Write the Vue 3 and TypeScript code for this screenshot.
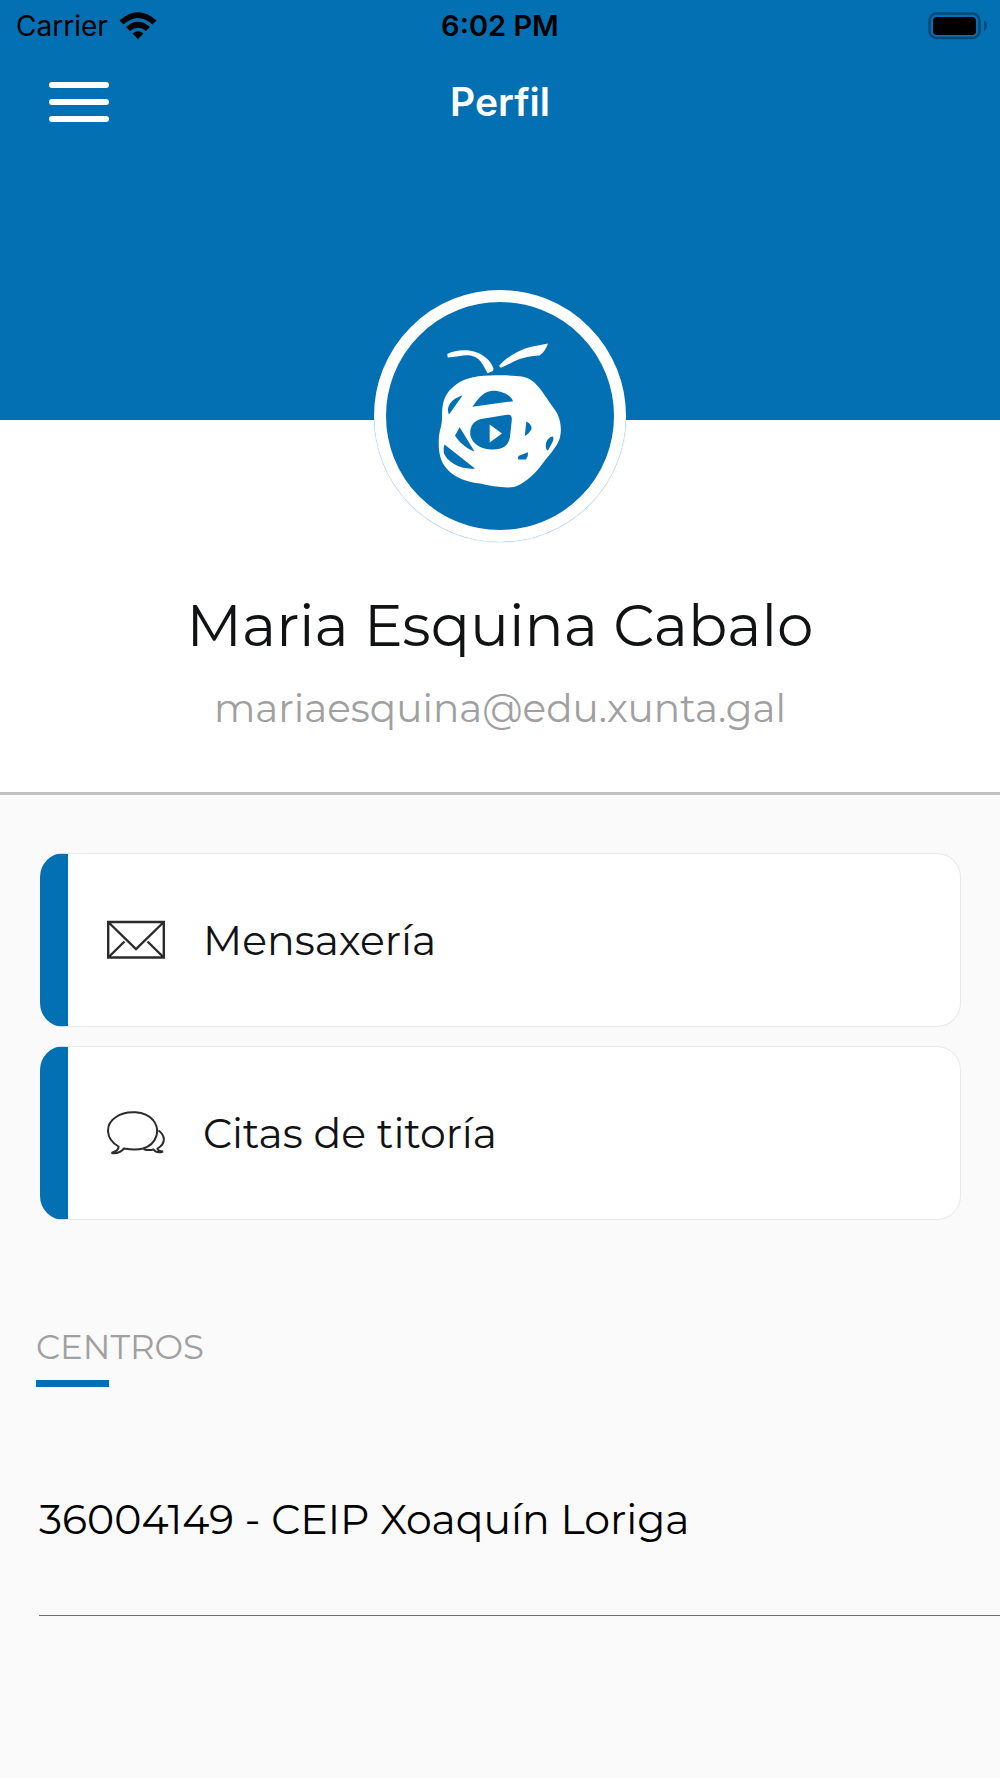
<script setup lang="ts">
interface Shortcut {
  id: string
  label: string
  icon: 'mail' | 'chat'
}

interface School {
  code: string
  name: string
}

const user = { name: 'Maria Esquina Cabalo', email: 'mariaesquina@edu.xunta.gal' }

const shortcuts: Shortcut[] = [
  { id: 'messages', label: 'Mensaxería', icon: 'mail' },
  { id: 'appointments', label: 'Citas de titoría', icon: 'chat' },
]

const schools: School[] = [{ code: '36004149', name: 'CEIP Xoaquín Loriga' }]
</script>

<template>
  <div class="screen">
    <header class="hero">
      <div class="status">
        <div class="carrier">
          <span>Carrier</span>
          <svg class="wifi" viewBox="0 0 38 28" aria-hidden="true">
            <path d="M0.5 8.5 Q19 -8 37.500 8.500 L33.500 12.500 Q19 -0.500 4.500 12.500Z" />
            <path d="M7 15 Q19 4.500 31 15 L27 19 Q19 12.500 11 19Z" />
            <path d="M13.500 21.500 Q19 17 24.500 21.500 L19 27.200Z" />
          </svg>
        </div>
        <time class="clock">6:02 PM</time>
        <svg class="battery" viewBox="0 0 60 28" aria-hidden="true">
          <rect x="1.500" y="1.500" width="50" height="24.500" rx="7" fill="none" stroke="#034a77" stroke-width="2.600" />
          <rect x="5" y="5" width="43" height="18" rx="4" />
          <path d="M56 8.500 Q59 10 59 13.500 Q59 17.500 56 19Z" fill="#034a77" />
        </svg>
      </div>
      <nav class="bar">
        <button class="menu" type="button" aria-label="Menú">
          <span></span>
          <span></span>
          <span></span>
        </button>
        <h1 class="title">Perfil</h1>
      </nav>
    </header>

    <section class="profile">
      <div class="avatar">
        <svg viewBox="0 0 150 170" class="logo" aria-hidden="true">
          <g fill="#fff">
            <path d="M22.300 24 C30 19.500 42 19.500 49 21.500 C59 24.500 66 31 68.500 38.500 L68 41 L62.500 43.300 C59 37 56 29 49 26.500 C41 23.500 34 27 22.700 27.500Z" />
            <path d="M74 36 C80 28 94 20 105 17 L123 13.500 C121.500 18 119 22.500 114.500 25.500 C104 26 92 29 85 33.500 L76 37.700Z" />
            <path d="M65 45.500 C78 45 90 45.500 97 46.500 C105 48 111 53 116 60 L132 83 C136 91 137 101 134.500 109 C132 117 123 126 115 137 C108 146 98 154 89 157 C79 158.500 66 156 55 153.500 C43 152.500 30 148 22 139 C14 130 13.500 119 13.800 110 C13.800 101 17 97 17 88 C17 76 18 66 27 58 C37 48.500 48 46 65 45.500Z" />
          </g>
          <g fill="#0470b4">
            <path d="M47.300 76.700 C52 71 57 62 66 61 C75 60 86 65 88 71.200Z" />
            <path d="M37.500 65.500 C28 68 20 76 24 84.500Z" />
            <path d="M82 84.800 C86 84.300 87 86 86.800 90 L85 107 C83.500 116 77 119.500 68 119.500 C58 120 48 115 45.500 106 C44 96 49 91 56 89Z" />
            <path d="M34.700 97.300 L49.500 121.500 C39 118 32 109 30 105.500Z" />
            <path d="M19.500 114.500 L50 138.500 C36 140 22 132 18.800 123 Q18 118 19.500 114.500Z" />
            <path d="M101.300 91.500 Q107 94 106.500 99 Q104 104 99.800 106Z" />
            <path d="M127.700 106.500 Q129.500 108 127 113 L123 120.500 Q120 120 121 113 Q123 107 127.700 106.500Z" />
            <path d="M103 122.300 Q103.500 126 101 129.500 L93.500 129.500 Q92 127 94.500 125.500Z" />
          </g>
          <path d="M64.700 94.500 V112.500 L77 103.500Z" fill="#fff" />
        </svg>
      </div>
      <h2 class="name">{{ user.name }}</h2>
      <p class="email">{{ user.email }}</p>
    </section>

    <main class="content">
      <div class="cards">
        <button v-for="item in shortcuts" :key="item.id" class="card" type="button">
          <svg v-if="item.icon === 'mail'" class="icon" viewBox="0 0 58 44" aria-hidden="true">
            <path d="M1.200 4 H56.800 V39.500 H1.200Z M1.200 4 L29 31 L56.800 4 M1.200 39.500 L17.500 23.500 M56.800 39.500 L40.500 23.500" />
          </svg>
          <svg v-else class="icon chat" viewBox="0 0 58 44" aria-hidden="true">
            <path d="M11.500 35.500 C-2 28 -2 13 9 6 C20 -1.500 38 0 46 9 C54 19 50 33 36 37.500 C29 39.500 23 38.500 17 37.500 C14 41 10 43 4.500 42 C9 40.500 12 38.500 11.500 35.500Z" />
            <path d="M51.500 19.500 C59 25 58.500 33 50.500 37.500 C50.500 39 52 40 56 40.500 C52 42 48.500 41 46.500 38.500 C43 39.500 39 39 36.500 38" />
          </svg>
          <span>{{ item.label }}</span>
        </button>
      </div>

      <section class="schools">
        <h3 class="heading">CENTROS</h3>
        <ul class="list">
          <li v-for="school in schools" :key="school.code">{{ school.code }} - {{ school.name }}</li>
        </ul>
      </section>
    </main>
  </div>
</template>

<style>
body {
  margin: 0;
  background: #fafafa;
}
</style>

<style scoped>
.screen {
  min-height: 100vh;
  background: #fafafa;
  color: #111214;
  font-family: Montserrat, Inter, sans-serif;
}

h1, h2, h3, p, ul {
  margin: 0;
  padding: 0;
  font-weight: 400;
}

button {
  border: 0;
  padding: 0;
  background: none;
  color: inherit;
  font: inherit;
}

.hero {
  padding-bottom: 268px;
  background: #0470b4;
  font-family: Inter, sans-serif;
}

.status {
  display: grid;
  grid-template-columns: 1fr auto 1fr;
  align-items: center;
  height: 52px;
  padding: 0 12px;
  color: #000;
  font-size: 29px;
  line-height: 50px;
}

.carrier {
  display: flex;
  align-items: center;
  gap: 11px;
  padding-left: 4px;
  font-size: 28px;
}

.wifi {
  width: 38px;
  height: 28px;
}

.clock {
  font-weight: 600;
}

.battery {
  justify-self: end;
  width: 60px;
  height: 28px;
}

.bar {
  display: grid;
  grid-template-columns: 1fr auto 1fr;
  align-items: center;
  height: 100px;
  padding: 0 49px;
}

.menu {
  display: flex;
  flex-direction: column;
  gap: 11px;
  width: 60px;
}

.menu span {
  height: 6px;
  border-radius: 3px;
  background: #fff;
}

.title {
  color: #fff;
  font-size: 39px;
  font-weight: 600;
  line-height: 100px;
}

.profile {
  display: flex;
  flex-direction: column;
  align-items: center;
  padding-bottom: 56px;
  border-bottom: 3px solid #c2c2c2;
  background: #fff;
}

.avatar {
  display: flex;
  align-items: center;
  justify-content: center;
  box-sizing: border-box;
  width: 252px;
  height: 252px;
  margin-top: -130px;
  padding-bottom: 3px;
  border: 12px solid #fff;
  border-radius: 50%;
  background: #0470b4;
  box-shadow: 0 0 1px #0470b4;
}

.logo {
  width: 150px;
  height: 170px;
}

.name {
  margin-top: 48px;
  font-size: 58px;
  line-height: 72px;
}

.email {
  margin-top: 18px;
  color: #a0a0a0;
  font-size: 39px;
  line-height: 56px;
}

.cards {
  display: flex;
  flex-direction: column;
  gap: 19px;
  padding: 58px 39px 0 40px;
}

.card {
  display: flex;
  align-items: center;
  gap: 38px;
  box-sizing: border-box;
  height: 174px;
  padding-left: 39px;
  border: 1px solid #e9e9e9;
  border-left: 28px solid #0470b4;
  border-radius: 24px;
  background: #fff;
  font-size: 41px;
  line-height: 56px;
}

.icon {
  width: 58px;
  height: 44px;
  fill: none;
  stroke: #2b2b2b;
  stroke-width: 2.400;
}

.chat {
  stroke-width: 2;
}

.schools {
  margin-top: 107px;
}

.heading {
  padding-left: 36px;
  color: #a0a0a0;
  font-size: 34px;
  line-height: 40px;
}

.heading::after {
  content: '';
  display: block;
  width: 73px;
  height: 7px;
  margin-top: 13px;
  background: #0470b4;
}

.list {
  margin: 64px 0 0 39px;
  list-style: none;
}

.list li {
  padding: 40px 0 68px;
  border-bottom: 1px solid #6c6c6c;
  color: #000;
  font-size: 41px;
  line-height: 56px;
}
</style>
